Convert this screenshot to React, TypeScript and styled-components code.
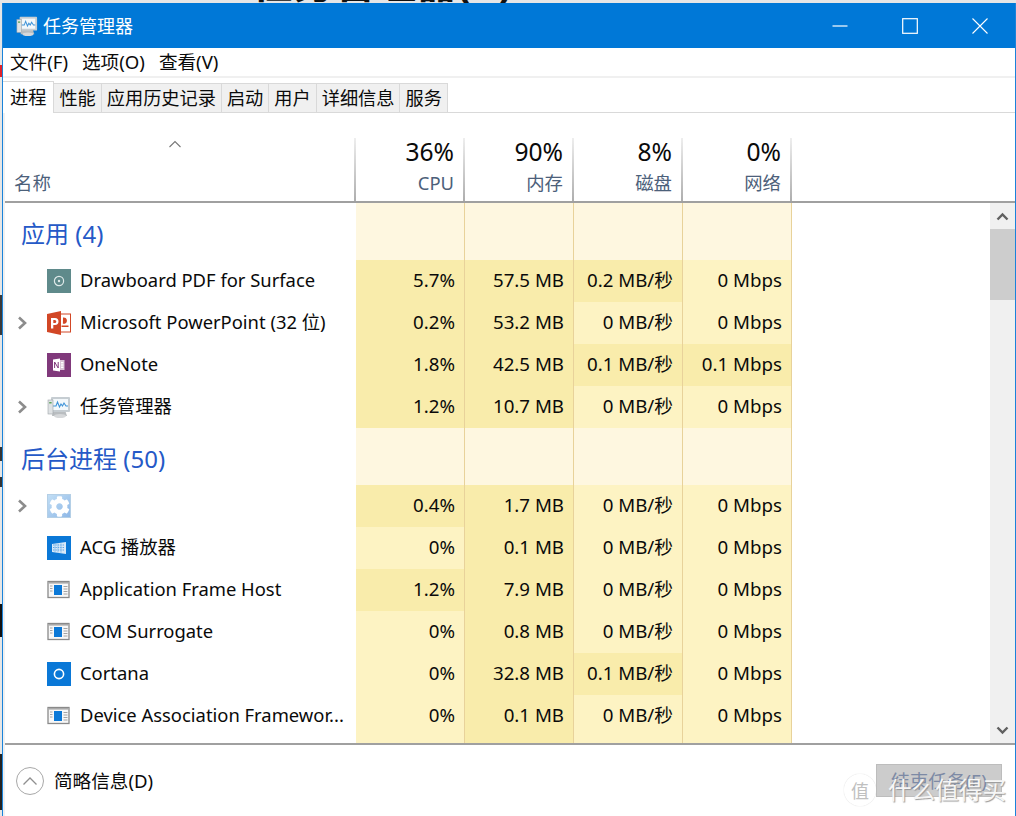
import React from 'react';
import styled, { createGlobalStyle } from 'styled-components';
import { FaCog } from 'react-icons/fa';

type Row = {
  name: string;
  icon: React.ReactNode;
  expandable?: boolean;
  values: string[];
  hot: boolean[];
};

const GlobalStyle = createGlobalStyle`
  html, body {
    margin: 0;
    padding: 0;
    width: 1016px;
    height: 816px;
    overflow: hidden;
    background: #e6e6e6;
    font-family: 'Noto Sans', 'Noto Sans CJK SC', sans-serif;
    color: #0a0a0a;
  }
`;

const Tile = styled.span<{ $bg: string }>`
  display: flex;
  width: 24px;
  height: 24px;
  background: ${(p) => p.$bg};
`;

const GearTile = styled.span`
  display: flex;
  align-items: center;
  justify-content: center;
  width: 24px;
  height: 24px;
  background: linear-gradient(135deg, #c4e0f6, #8cb6e6);
  box-shadow: inset 0 0 0 1px #b4cfe6;
`;

const TaskManagerIcon = ({ size }: { size: number }) => (
  <svg width={size} height={size} viewBox="0 0 24 24">
    <path d="M6 15 H18 L20 21 H5 Z" fill="#b9bdc0" />
    <ellipse cx="13" cy="21" rx="6" ry="2" fill="#d6d8da" />
    <rect x="4" y="2" width="19" height="15" rx="1" fill="#c6cdd2" />
    <rect x="6" y="4" width="15" height="11" fill="#f3f8fb" />
    <path d="M6 11 L9 11 L10.5 7 L12.5 12 L14 9 L15.5 11 L17 8 L19 11 L21 11" fill="none" stroke="#3f93d8" strokeWidth="1.1" />
    <rect x="1" y="5" width="5" height="14" fill="#dfe2e4" stroke="#9fa5a9" strokeWidth="0.6" />
    <rect x="2.2" y="7" width="2.4" height="1.5" fill="#5ea45b" />
  </svg>
);

const PowerPointIcon = () => (
  <svg width={24} height={24} viewBox="0 0 24 24">
    <rect x="12" y="3" width="11.5" height="18" fill="#fff" stroke="#d24726" strokeWidth="1" />
    <path d="M16 6.5 a3.2 3.2 0 1 1 -0.1 6.2 Z" fill="#d24726" />
    <rect x="14.5" y="14.5" width="7" height="1.5" fill="#d24726" />
    <path d="M0 3 L14 0 V24 L0 21 Z" fill="#d24726" />
    <path d="M4 7 H8 a3 3 0 0 1 0 7 H6.3 V17.5 H4 Z M6.3 9 V12 H7.8 a1.5 1.5 0 0 0 0 -3 Z" fill="#fff" fillRule="evenodd" />
  </svg>
);

const OneNoteMark = () => (
  <svg width={24} height={24} viewBox="0 0 24 24">
    <rect x="11" y="7" width="6.5" height="10" fill="#d9c3d6" />
    <path d="M6 6.5 L13 5.5 V18.5 L6 17.5 Z" fill="#fff" />
    <path d="M7.6 15 V9 L11.2 15 V9" fill="none" stroke="#80397b" strokeWidth="1" />
    <rect x="14" y="9" width="2.4" height="1.4" fill="#fff" />
    <rect x="14" y="11.3" width="2.4" height="1.4" fill="#fff" />
    <rect x="14" y="13.6" width="2.4" height="1.4" fill="#fff" />
  </svg>
);

const AcgMark = () => (
  <svg width={24} height={24} viewBox="0 0 24 24">
    <path d="M5 8 L19 6 V18 L5 16 Z" fill="#d7e9f8" />
    <path d="M6 9 H18 M6 11.5 H18 M6 14 H18" stroke="#3f93de" strokeWidth="0.8" strokeDasharray="1.4 1" />
    <path d="M8 8 V16 M11 7.6 V16.4 M14 7.3 V16.8" stroke="#79b6e8" strokeWidth="0.7" />
  </svg>
);

const AppFrameIcon = () => (
  <svg width={24} height={24} viewBox="0 0 24 24">
    <rect x="1" y="3.5" width="21" height="16" fill="#f7f7f7" stroke="#8a8a8a" strokeWidth="1.3" />
    <rect x="1.5" y="4" width="20" height="1.6" fill="#a9a9a9" />
    <rect x="7" y="7" width="8" height="10" fill="#0a78d7" />
    <path d="M3 8 H5.5 M3 10.5 H5.5 M3 13 H5.5 M16.5 8.5 H20.5 M16.5 11 H20.5 M16.5 13.5 H20.5 M16.5 16 H20.5" stroke="#9a9a9a" strokeWidth="0.9" />
  </svg>
);

const ChevronRight = () => (
  <svg width={11} height={14} viewBox="0 0 11 14">
    <path d="M2 1.5 L8 7 L2 12.5" fill="none" stroke="#8c8c8c" strokeWidth="2.6" />
  </svg>
);

const frameIcon = <AppFrameIcon />;

const apps: Row[] = [
  {
    name: 'Drawboard PDF for Surface',
    icon: (
      <Tile $bg="#5f8a8b">
        <svg width={24} height={24} viewBox="0 0 24 24">
          <circle cx="12" cy="12" r="4.6" fill="none" stroke="#dfe9e9" strokeWidth="1.2" />
          <circle cx="12" cy="12" r="1.2" fill="#dfe9e9" />
        </svg>
      </Tile>
    ),
    values: ['5.7%', '57.5 MB', '0.2 MB/秒', '0 Mbps'],
    hot: [true, true, true, false],
  },
  {
    name: 'Microsoft PowerPoint (32 位)',
    icon: <PowerPointIcon />,
    expandable: true,
    values: ['0.2%', '53.2 MB', '0 MB/秒', '0 Mbps'],
    hot: [true, true, false, false],
  },
  {
    name: 'OneNote',
    icon: (
      <Tile $bg="#80397b">
        <OneNoteMark />
      </Tile>
    ),
    values: ['1.8%', '42.5 MB', '0.1 MB/秒', '0.1 Mbps'],
    hot: [true, true, true, true],
  },
  {
    name: '任务管理器',
    icon: <TaskManagerIcon size={24} />,
    expandable: true,
    values: ['1.2%', '10.7 MB', '0 MB/秒', '0 Mbps'],
    hot: [true, true, false, false],
  },
];

const background: Row[] = [
  {
    name: '',
    icon: (
      <GearTile>
        <FaCog size={21} color="#fff" />
      </GearTile>
    ),
    expandable: true,
    values: ['0.4%', '1.7 MB', '0 MB/秒', '0 Mbps'],
    hot: [true, true, false, false],
  },
  {
    name: 'ACG 播放器',
    icon: (
      <Tile $bg="#0a78d7">
        <AcgMark />
      </Tile>
    ),
    values: ['0%', '0.1 MB', '0 MB/秒', '0 Mbps'],
    hot: [false, true, false, false],
  },
  {
    name: 'Application Frame Host',
    icon: frameIcon,
    values: ['1.2%', '7.9 MB', '0 MB/秒', '0 Mbps'],
    hot: [true, true, false, false],
  },
  {
    name: 'COM Surrogate',
    icon: frameIcon,
    values: ['0%', '0.8 MB', '0 MB/秒', '0 Mbps'],
    hot: [false, true, false, false],
  },
  {
    name: 'Cortana',
    icon: (
      <Tile $bg="#0a78d7">
        <svg width={24} height={24} viewBox="0 0 24 24">
          <circle cx="12" cy="12" r="4.6" fill="none" stroke="#fff" strokeWidth="1.6" />
        </svg>
      </Tile>
    ),
    values: ['0%', '32.8 MB', '0.1 MB/秒', '0 Mbps'],
    hot: [false, true, true, false],
  },
  {
    name: 'Device Association Framewor...',
    icon: frameIcon,
    values: ['0%', '0.1 MB', '0 MB/秒', '0 Mbps'],
    hot: [false, true, false, false],
  },
  {
    name: '',
    icon: null,
    values: ['', '', '', ''],
    hot: [false, true, false, false],
  },
];

const tabs = ['进程', '性能', '应用历史记录', '启动', '用户', '详细信息', '服务'];
const menus = ['文件(F)', '选项(O)', '查看(V)'];
const summary = [
  { percent: '36%', label: 'CPU' },
  { percent: '90%', label: '内存' },
  { percent: '8%', label: '磁盘' },
  { percent: '0%', label: '网络' },
];
const blots = [
  { gap: 62, height: 12, color: '#e0222a' },
  { gap: 218, height: 40, color: '#3a3a3a' },
  { gap: 112, height: 14, color: '#333' },
  { gap: 16, height: 10, color: '#333' },
  { gap: 117, height: 33, color: '#111' },
  { gap: 117, height: 56, color: '#222' },
];

const renderRows = (rows: Row[]) =>
  rows.map((row, i) => (
    <DataRow key={i}>
      <NameCell>
        <Expander>{row.expandable && <ChevronRight />}</Expander>
        <IconSlot>{row.icon}</IconSlot>
        <NameText>{row.name}</NameText>
      </NameCell>
      {row.values.map((value, j) => (
        <ValueCell key={j} $hot={row.hot[j]}>
          {value}
        </ValueCell>
      ))}
    </DataRow>
  ));

const App: React.FC = () => {
  return (
    <Page>
      <GlobalStyle />
      <TopStrip>
        <BehindTitle>任务管理器(X)</BehindTitle>
      </TopStrip>
      <Desk>
        <LeftStrip>
          {blots.map((blot, i) => (
            <Blot key={i} $gap={blot.gap} $height={blot.height} $color={blot.color} />
          ))}
        </LeftStrip>
        <Window>
          <TitleBar>
            <TitleIcon>
              <TaskManagerIcon size={22} />
            </TitleIcon>
            <TitleText>任务管理器</TitleText>
            <WindowButtons>
              <WindowButton>
                <svg width={16} height={16} viewBox="0 0 16 16">
                  <path d="M0.5 8 H15.5" stroke="#fff" strokeWidth="1.2" />
                </svg>
              </WindowButton>
              <WindowButton>
                <svg width={16} height={16} viewBox="0 0 16 16">
                  <rect x="0.7" y="0.7" width="14.6" height="14.6" fill="none" stroke="#fff" strokeWidth="1.2" />
                </svg>
              </WindowButton>
              <WindowButton>
                <svg width={16} height={16} viewBox="0 0 16 16">
                  <path d="M0.5 0.5 L15.5 15.5 M15.5 0.5 L0.5 15.5" stroke="#fff" strokeWidth="1.1" />
                </svg>
              </WindowButton>
            </WindowButtons>
          </TitleBar>

          <MenuBar>
            {menus.map((menu) => (
              <MenuItem key={menu}>{menu}</MenuItem>
            ))}
          </MenuBar>

          <TabBar>
            {tabs.map((tab, i) => (
              <Tab key={tab} $active={i === 0}>
                {tab}
              </Tab>
            ))}
          </TabBar>

          <Panel>
            <HeaderRow>
              <NameHeader>
                <SortArrow>
                  <svg width={14} height={8} viewBox="0 0 14 8">
                    <path d="M1.5 7 L7 1.5 L12.5 7" fill="none" stroke="#777" strokeWidth="1.1" />
                  </svg>
                </SortArrow>
                <HeaderLabel>名称</HeaderLabel>
              </NameHeader>
              {summary.map((col) => (
                <MetricHeader key={col.label}>
                  <Percent>{col.percent}</Percent>
                  <HeaderLabel>{col.label}</HeaderLabel>
                </MetricHeader>
              ))}
            </HeaderRow>

            <Body>
              <Rows>
                <GroupRow>
                  <GroupName>应用 (4)</GroupName>
                  <GroupCell />
                  <GroupCell />
                  <GroupCell />
                  <GroupCell />
                </GroupRow>
                {renderRows(apps)}
                <GroupRow>
                  <GroupName>后台进程 (50)</GroupName>
                  <GroupCell />
                  <GroupCell />
                  <GroupCell />
                  <GroupCell />
                </GroupRow>
                {renderRows(background)}
              </Rows>
              <ScrollBar>
                <ScrollButton>
                  <svg width={13} height={9} viewBox="0 0 13 9">
                    <path d="M1.5 7.5 L6.5 2.5 L11.5 7.5" fill="none" stroke="#606060" strokeWidth="2.4" />
                  </svg>
                </ScrollButton>
                <ScrollThumb />
                <ScrollTrack />
                <ScrollButton>
                  <svg width={13} height={9} viewBox="0 0 13 9">
                    <path d="M1.5 1.5 L6.5 6.5 L11.5 1.5" fill="none" stroke="#606060" strokeWidth="2.4" />
                  </svg>
                </ScrollButton>
              </ScrollBar>
            </Body>

            <Footer>
              <CollapseCircle>
                <svg width={16} height={10} viewBox="0 0 16 10">
                  <path d="M1.5 8.5 L8 2 L14.5 8.5" fill="none" stroke="#8f8f8f" strokeWidth="1.3" />
                </svg>
              </CollapseCircle>
              <FooterText>简略信息(D)</FooterText>
              <EndTask>结束任务(E)</EndTask>
              <Watermark>
                <WatermarkBadge>值</WatermarkBadge>
                <WatermarkText>什么值得买</WatermarkText>
              </Watermark>
            </Footer>
          </Panel>
        </Window>
      </Desk>
    </Page>
  );
};

const Page = styled.div`
  display: flex;
  flex-direction: column;
  width: 1016px;
  height: 816px;
  overflow: hidden;
`;

const TopStrip = styled.div`
  height: 3px;
  padding-left: 252px;
  overflow: hidden;
  background: #e6e6e6;
`;

const BehindTitle = styled.div`
  margin-top: -38px;
  font-size: 41px;
  line-height: 41px;
  font-weight: 700;
  color: #111;
  white-space: nowrap;
`;

const Desk = styled.div`
  display: flex;
  flex: 1;
  min-height: 0;
`;

const LeftStrip = styled.div`
  display: flex;
  flex-direction: column;
  flex: 0 0 2px;
  background: #e6e6e6;
`;

const Blot = styled.div<{ $gap: number; $height: number; $color: string }>`
  margin-top: ${(p) => p.$gap}px;
  height: ${(p) => p.$height}px;
  background: ${(p) => p.$color};
`;

const Window = styled.div`
  display: flex;
  flex-direction: column;
  flex: 1;
  min-width: 0;
  background: #fff;
  border-left: 1px solid #1a83da;
  border-right: 1px solid #1a83da;
`;

const TitleBar = styled.div`
  display: flex;
  align-items: center;
  flex: 0 0 45px;
  padding-left: 13px;
  background: #0078d7;
  color: #fff;
`;

const TitleIcon = styled.span`
  display: flex;
  width: 27px;
`;

const TitleText = styled.span`
  font-size: 18px;
  line-height: 24px;
`;

const WindowButtons = styled.div`
  display: flex;
  margin-left: auto;
`;

const WindowButton = styled.span`
  display: flex;
  align-items: center;
  justify-content: center;
  width: 70px;
  height: 45px;
`;

const MenuBar = styled.div`
  display: flex;
  align-items: center;
  gap: 14px;
  flex: 0 0 30px;
  box-sizing: border-box;
  padding-left: 7px;
  border-bottom: 2px solid #f0f0f0;
`;

const MenuItem = styled.span`
  font-size: 18.6px;
  line-height: 28px;
`;

const TabBar = styled.div`
  display: flex;
  align-items: flex-end;
  flex: 0 0 35px;
  border-bottom: 1px solid #d9d9d9;
  box-sizing: border-box;
`;

const Tab = styled.div<{ $active?: boolean }>`
  height: ${(p) => (p.$active ? 32 : 29)}px;
  margin-bottom: ${(p) => (p.$active ? -1 : 0)}px;
  padding: 0 ${(p) => (p.$active ? 7 : 5)}px;
  font-size: 18.2px;
  line-height: ${(p) => (p.$active ? 30 : 29)}px;
  background: ${(p) => (p.$active ? '#fff' : '#f0f0f0')};
  border: 1px solid #d9d9d9;
  border-left: 0;
  border-bottom: 0;
  box-sizing: border-box;
`;

const Panel = styled.div`
  display: flex;
  flex-direction: column;
  flex: 1;
  min-height: 0;
  border-left: 2px solid #f0f0f0;
`;

const HeaderRow = styled.div`
  display: flex;
  flex: 0 0 90px;
  box-sizing: border-box;
  padding-top: 25px;
  border-bottom: 2px solid #a0a0a0;
`;

const NameHeader = styled.div`
  display: flex;
  flex-direction: column;
  flex: 0 0 351px;
  box-sizing: border-box;
  padding-left: 9px;
  border-right: 2px solid;
  border-image: linear-gradient(#efefef, #adadad) 1;
`;

const SortArrow = styled.div`
  display: flex;
  justify-content: center;
  height: 28px;
  padding: 2px 18px 0 0;
  box-sizing: border-box;
`;

const HeaderLabel = styled.div`
  margin-top: auto;
  font-size: 18.4px;
  line-height: 26px;
  color: #4c607a;
  padding-bottom: 5px;
`;

const MetricHeader = styled.div`
  display: flex;
  flex-direction: column;
  align-items: flex-end;
  flex: 0 0 109px;
  box-sizing: border-box;
  padding-right: 9px;
  border-right: 2px solid;
  border-image: linear-gradient(#efefef, #adadad) 1;
`;

const Percent = styled.div`
  font-size: 24.6px;
  line-height: 27px;
`;

const Body = styled.div`
  display: flex;
  flex: 0 0 540px;
  min-height: 0;
  overflow: hidden;
`;

const Rows = styled.div`
  flex: 1;
  min-width: 0;
`;

const GroupRow = styled.div`
  display: flex;
  height: 57px;
`;

const GroupName = styled.div`
  flex: 0 0 351px;
  box-sizing: border-box;
  padding: 13px 0 0 16px;
  font-size: 24px;
  line-height: 36px;
  color: #2559c7;
`;

const GroupCell = styled.div`
  flex: 0 0 109px;
  box-sizing: border-box;
  background: #fef7e0;
  border-right: 1px solid #e8d29a;
`;

const DataRow = styled.div`
  display: flex;
  height: 42px;
`;

const NameCell = styled.div`
  display: flex;
  align-items: center;
  flex: 0 0 351px;
  min-width: 0;
  box-sizing: border-box;
  padding-left: 12px;
`;

const Expander = styled.span`
  display: flex;
  flex: 0 0 30px;
`;

const IconSlot = styled.span`
  display: flex;
  flex: 0 0 33px;
`;

const NameText = styled.span`
  padding-bottom: 2px;
  font-size: 18.4px;
  line-height: 26px;
  white-space: nowrap;
`;

const ValueCell = styled.div<{ $hot?: boolean }>`
  flex: 0 0 109px;
  box-sizing: border-box;
  padding-right: 9px;
  text-align: right;
  font-size: 18.7px;
  line-height: 40px;
  white-space: nowrap;
  background: ${(p) => (p.$hot ? '#f9ecab' : '#fdf3c3')};
  border-right: 1px solid #e8d29a;
`;

const ScrollBar = styled.div`
  display: flex;
  flex-direction: column;
  flex: 0 0 25px;
  background: #f0f0f0;
`;

const ScrollButton = styled.div`
  display: flex;
  align-items: center;
  justify-content: center;
  flex: 0 0 26px;
`;

const ScrollThumb = styled.div`
  flex: 0 0 71px;
  background: #cdcdcd;
`;

const ScrollTrack = styled.div`
  flex: 1;
`;

const Footer = styled.div`
  position: relative;
  display: flex;
  align-items: center;
  flex: 1;
  box-sizing: border-box;
  padding: 0 13px 0 11px;
  border-top: 2px solid #a0a0a0;
`;

const CollapseCircle = styled.span`
  display: flex;
  align-items: center;
  justify-content: center;
  width: 28px;
  height: 28px;
  border: 1px solid #a8a8a8;
  border-radius: 50%;
  box-sizing: border-box;
`;

const FooterText = styled.span`
  margin-left: 10px;
  font-size: 18.6px;
  line-height: 26px;
`;

const EndTask = styled.div`
  margin-left: auto;
  width: 126px;
  height: 33px;
  box-sizing: border-box;
  border: 1px solid #bdbdbd;
  background: #cccccc;
  color: #7d8aa5;
  font-size: 18.6px;
  line-height: 31px;
  text-align: center;
`;

const Watermark = styled.div`
  position: absolute;
  right: 9px;
  top: 29px;
  display: flex;
  align-items: center;
  gap: 12px;
`;

const WatermarkBadge = styled.span`
  display: flex;
  align-items: center;
  justify-content: center;
  width: 28px;
  height: 28px;
  border: 2px solid rgba(255, 255, 255, 0.9);
  border-radius: 50%;
  font-size: 18px;
  color: #c0c0c0;
  box-shadow: 0 0 1px #bbb;
`;

const WatermarkText = styled.span`
  font-size: 23.6px;
  line-height: 30px;
  color: #f6f6f6;
  text-shadow: 1px 1px 1px #9a9a9a;
`;

export default App;
